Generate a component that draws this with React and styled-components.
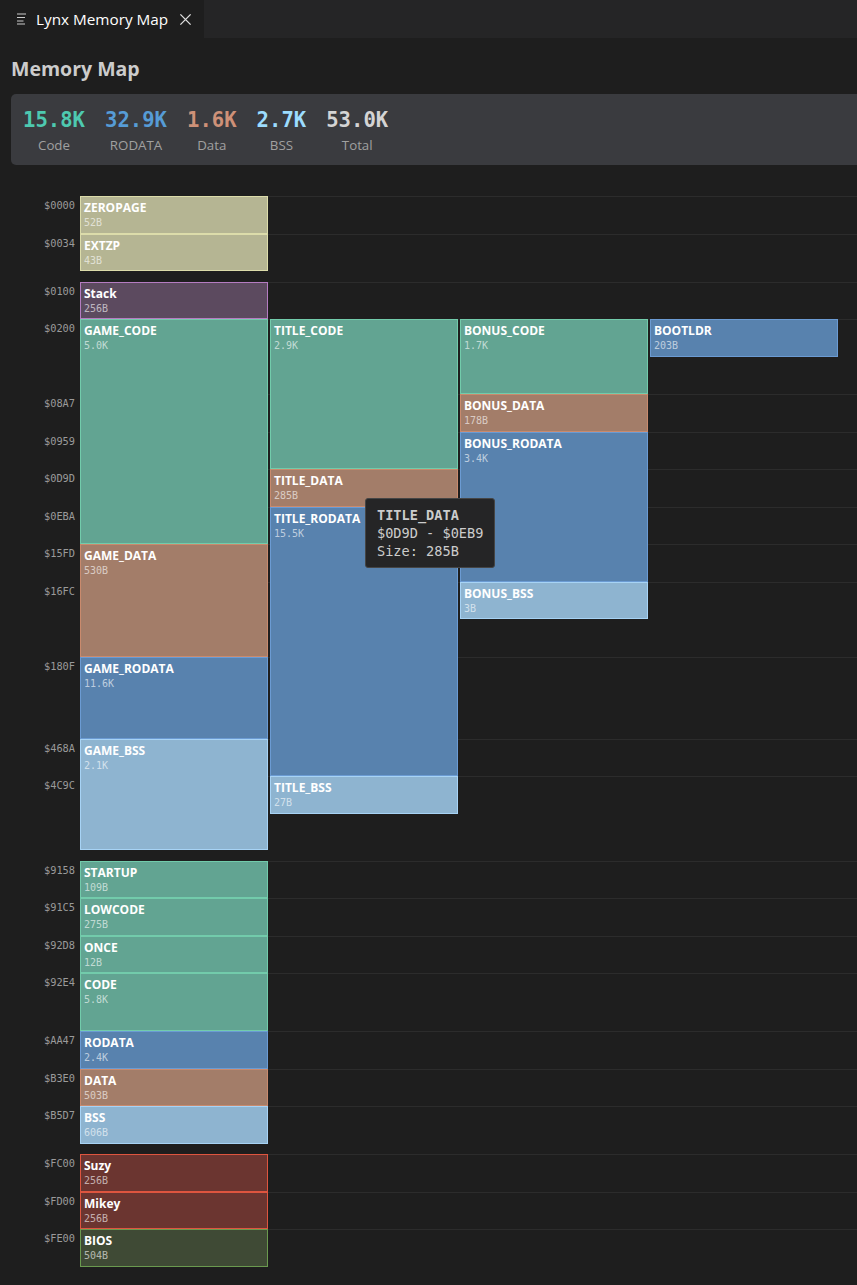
import React from 'react';
import styled, { createGlobalStyle, css } from 'styled-components';

const UI_FONT = `"Open Sans", "Noto Sans", "Liberation Sans", sans-serif`;
const MONO_FONT = `"DejaVu Sans Mono", "Liberation Mono", monospace`;

const GlobalStyle = createGlobalStyle`
  html, body {
    margin: 0;
    padding: 0;
    background: #1e1e1e;
    overflow: hidden;
  }
  body {
    font-family: ${UI_FONT};
    color: #cccccc;
  }
`;

// colours per segment kind: [background, border]
const kinds = {
  zp: ['#b5b593', '#dcdcaa'],
  stack: ['#5c4a5f', '#b57cc1'],
  code: ['#62a492', '#72cbab'],
  data: ['#a37d69', '#c98a6d'],
  rodata: ['#5882ae', '#6b9bd3'],
  bss: ['#8eb4d0', '#a7d3f5'],
  hw: ['#6b3530', '#de553f'],
  rom: ['#3f4a35', '#6a9a4f'],
};

const stats = [
  { value: '15.8K', label: 'Code', color: '#4ec9b0' },
  { value: '32.9K', label: 'RODATA', color: '#569cd6' },
  { value: '1.6K', label: 'Data', color: '#ce9178' },
  { value: '2.7K', label: 'BSS', color: '#9cdcfe' },
  { value: '53.0K', label: 'Total', color: '#d4d4d4' },
];

const groups = [
  {
    rows: [['$0000', 37.5], ['$0034', 37.5]],
    blocks: [
      { name: 'ZEROPAGE', size: '52B', kind: 'zp', col: 1, row: 1 },
      { name: 'EXTZP', size: '43B', kind: 'zp', col: 1, row: 2 },
    ],
  },
  {
    rows: [
      ['$0100', 37.5], ['$0200', 75], ['$08A7', 37.5], ['$0959', 37.5],
      ['$0D9D', 37.5], ['$0EBA', 37.5], ['$15FD', 37.5], ['$16FC', 75],
      ['$180F', 82], ['$468A', 37.5], ['$4C9C', 74],
    ],
    blocks: [
      { name: 'Stack', size: '256B', kind: 'stack', col: 1, row: 1 },
      { name: 'GAME_CODE', size: '5.0K', kind: 'code', col: 1, row: 2, span: 5 },
      { name: 'GAME_DATA', size: '530B', kind: 'data', col: 1, row: 7, span: 2 },
      { name: 'GAME_RODATA', size: '11.6K', kind: 'rodata', col: 1, row: 9 },
      { name: 'GAME_BSS', size: '2.1K', kind: 'bss', col: 1, row: 10, span: 2 },
      { name: 'TITLE_CODE', size: '2.9K', kind: 'code', col: 2, row: 2, span: 3 },
      { name: 'TITLE_DATA', size: '285B', kind: 'data', col: 2, row: 5 },
      { name: 'TITLE_RODATA', size: '15.5K', kind: 'rodata', col: 2, row: 6, span: 5 },
      { name: 'TITLE_BSS', size: '27B', kind: 'bss', col: 2, row: 11, short: true },
      { name: 'BONUS_CODE', size: '1.7K', kind: 'code', col: 3, row: 2 },
      { name: 'BONUS_DATA', size: '178B', kind: 'data', col: 3, row: 3 },
      { name: 'BONUS_RODATA', size: '3.4K', kind: 'rodata', col: 3, row: 4, span: 4 },
      { name: 'BONUS_BSS', size: '3B', kind: 'bss', col: 3, row: 8, short: true },
      { name: 'BOOTLDR', size: '203B', kind: 'rodata', col: 4, row: 2, short: true },
    ],
  },
  {
    rows: [
      ['$9158', 37.5], ['$91C5', 37.5], ['$92D8', 37.5], ['$92E4', 58],
      ['$AA47', 37.5], ['$B3E0', 37.5], ['$B5D7', 37.5],
    ],
    blocks: [
      { name: 'STARTUP', size: '109B', kind: 'code', col: 1, row: 1 },
      { name: 'LOWCODE', size: '275B', kind: 'code', col: 1, row: 2 },
      { name: 'ONCE', size: '12B', kind: 'code', col: 1, row: 3 },
      { name: 'CODE', size: '5.8K', kind: 'code', col: 1, row: 4 },
      { name: 'RODATA', size: '2.4K', kind: 'rodata', col: 1, row: 5 },
      { name: 'DATA', size: '503B', kind: 'data', col: 1, row: 6 },
      { name: 'BSS', size: '606B', kind: 'bss', col: 1, row: 7 },
    ],
  },
  {
    rows: [['$FC00', 37.5], ['$FD00', 37.5], ['$FE00', 37.5]],
    blocks: [
      { name: 'Suzy', size: '256B', kind: 'hw', col: 1, row: 1 },
      { name: 'Mikey', size: '256B', kind: 'hw', col: 1, row: 2 },
      { name: 'BIOS', size: '504B', kind: 'rom', col: 1, row: 3 },
    ],
  },
];

const Page = styled.div`
  position: relative;
  min-width: 900px;
  min-height: 1285px;
  background: #1e1e1e;
`;

const TabBar = styled.div`
  display: flex;
  height: 38px;
  background: #252526;
`;

const Tab = styled.div`
  display: flex;
  align-items: center;
  width: 204px;
  box-sizing: border-box;
  padding: 0 0 0 16px;
  background: #1e1e1e;
  color: #ffffff;
`;

const TabTitle = styled.span`
  font-size: 15.3px;
  margin-left: 8px;
  white-space: nowrap;
`;

const CloseButton = styled.span`
  display: flex;
  margin-left: 11px;
`;

const Content = styled.div`
  padding: 18px 0 0 11px;
`;

const Heading = styled.h1`
  margin: 0 0 12px;
  font-size: 19.5px;
  line-height: 26px;
  font-weight: 700;
  color: #cccccc;
`;

const StatsPanel = styled.div`
  display: flex;
  gap: 20px;
  height: 71px;
  box-sizing: border-box;
  padding: 13px 12px 0;
  background: #3a3b3f;
  border-radius: 5px;
`;

const Stat = styled.div`
  display: flex;
  flex-direction: column;
  align-items: center;
  gap: 2px;
`;

const StatValue = styled.span`
  font-family: ${MONO_FONT};
  font-weight: 700;
  font-size: 20.6px;
  line-height: 26px;
  color: ${(p) => p.$color};
`;

const StatLabel = styled.span`
  font-size: 13.3px;
  line-height: 20px;
  color: #a0a0a0;
`;

const Chart = styled.div`
  display: flex;
  flex-direction: column;
  gap: 10.5px;
  margin-top: 31px;
`;

const Group = styled.div`
  display: grid;
  grid-template-columns: 67px repeat(4, 188px) 1fr;
  grid-template-rows: ${(p) => p.$rows.map((h) => `${h}px`).join(' ')};
  column-gap: 2px;
`;

const RowLine = styled.div`
  grid-column: 2 / -1;
  grid-row: ${(p) => p.$row};
  border-top: 1px solid #2c2c2c;
`;

const Addr = styled.div`
  grid-column: 1;
  grid-row: ${(p) => p.$row};
  padding: 2px 3px 0 0;
  text-align: right;
  font-family: ${MONO_FONT};
  font-size: 10.3px;
  line-height: 15px;
  color: #9a9a9a;
`;

const Block = styled.div`
  position: relative;
  z-index: 1;
  grid-column: ${(p) => p.$col + 1};
  grid-row: ${(p) => p.$row} / span ${(p) => p.$span};
  box-sizing: border-box;
  padding: 2px 3px;
  overflow: hidden;
  background: ${(p) => kinds[p.$kind][0]};
  border: 1px solid ${(p) => kinds[p.$kind][1]};
  ${(p) =>
    p.$short &&
    css`
      align-self: start;
      height: 37.5px;
    `}
`;

const BlockName = styled.div`
  font-size: 12px;
  font-weight: 700;
  line-height: 17px;
  color: #ffffff;
  white-space: nowrap;
`;

const BlockSize = styled.div`
  font-family: ${MONO_FONT};
  font-size: 10px;
  line-height: 14px;
  color: rgba(255, 255, 255, 0.62);
`;

const Tooltip = styled.div`
  position: absolute;
  left: 365px;
  top: 498px;
  z-index: 5;
  padding: 7px 11px 7px;
  background: #252526;
  border: 1px solid #454545;
  border-radius: 3px;
  font-family: ${MONO_FONT};
  font-size: 13.6px;
  line-height: 18px;
  color: #cccccc;
  white-space: nowrap;
`;

const TipTitle = styled.div`
  font-weight: 700;
`;

function PreviewIcon() {
  return (
    <svg width="12" height="14" viewBox="0 0 12 14" fill="none" stroke="#cccccc" strokeWidth="1.2">
      <path d="M1 2h9M1 5.5h8M1 9h6.5M1 12h8" />
    </svg>
  );
}

function CloseIcon() {
  return (
    <svg width="13" height="13" viewBox="0 0 14 14" fill="none" stroke="#e0e0e0" strokeWidth="1.4">
      <path d="M1.5 1.5l11 11M12.5 1.5l-11 11" />
    </svg>
  );
}

function MemoryGroup({ rows, blocks }) {
  return (
    <Group $rows={rows.map((r) => r[1])}>
      {rows.map(([addr], i) => (
        <React.Fragment key={addr}>
          <RowLine $row={i + 1} />
          <Addr $row={i + 1}>{addr}</Addr>
        </React.Fragment>
      ))}
      {blocks.map((b) => (
        <Block
          key={b.name}
          $kind={b.kind}
          $col={b.col}
          $row={b.row}
          $span={b.span || 1}
          $short={b.short}
        >
          <BlockName>{b.name}</BlockName>
          <BlockSize>{b.size}</BlockSize>
        </Block>
      ))}
    </Group>
  );
}

export default function App() {
  return (
    <Page>
      <GlobalStyle />
      <TabBar>
        <Tab>
          <PreviewIcon />
          <TabTitle>Lynx Memory Map</TabTitle>
          <CloseButton>
            <CloseIcon />
          </CloseButton>
        </Tab>
      </TabBar>
      <Content>
        <Heading>Memory Map</Heading>
        <StatsPanel>
          {stats.map((s) => (
            <Stat key={s.label}>
              <StatValue $color={s.color}>{s.value}</StatValue>
              <StatLabel>{s.label}</StatLabel>
            </Stat>
          ))}
        </StatsPanel>
        <Chart>
          {groups.map((g, i) => (
            <MemoryGroup key={i} rows={g.rows} blocks={g.blocks} />
          ))}
        </Chart>
      </Content>
      <Tooltip>
        <TipTitle>TITLE_DATA</TipTitle>
        <div>$0D9D - $0EB9</div>
        <div>Size: 285B</div>
      </Tooltip>
    </Page>
  );
}
